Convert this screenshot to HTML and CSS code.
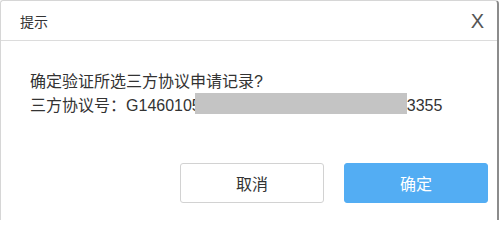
FILE: index.html
```html
<!DOCTYPE html>
<html lang="zh-CN">
<head>
<meta charset="utf-8">
<link rel="stylesheet" href="styles.css">
</head>
<body>
<div class="dialog">
  <div class="dialog-header">
    <span class="dialog-title">提示</span>
    <span class="dialog-close">X</span>
  </div>
  <div class="dialog-body">
    <p class="msg">确定验证所选三方协议申请记录?</p>
    <p class="msg">三方协议号<span class="colon">：</span>G1460105<span class="redact"></span>3355</p>
  </div>
  <div class="dialog-footer">
    <button class="btn btn-cancel">取消</button>
    <button class="btn btn-ok">确定</button>
  </div>
</div>
</body>
</html>
```

FILE: styles.css
```css
html, body {
  margin: 0;
  padding: 0;
  background: #fff;
}
body {
  width: 500px;
  height: 220px;
  overflow: hidden;
  font-family: "Liberation Sans", "Noto Sans CJK SC", sans-serif;
  color: #333;
}
.dialog {
  box-sizing: border-box;
  width: 499px;
  height: 220px;
  background: #fff;
  border-top: 1px solid #d6d6d6;
  border-left: 1px solid #d6d6d6;
  border-right: 2px solid #8c8c8c;
  border-radius: 3px 4px 0 0;
}
.dialog-header {
  height: 39px;
  border-bottom: 1px solid #dcdcdc;
  display: flex;
  align-items: center;
  justify-content: space-between;
  padding: 0 13px 0 19px;
}
.dialog-title {
  font-size: 14px;
  color: #333;
}
.dialog-close {
  font-size: 20px;
  color: #555;
  font-weight: normal;
  line-height: 20px;
}
.dialog-body {
  padding: 30px 0 0 29px;
}
.msg {
  margin: 0;
  font-size: 16px;
  line-height: 22px;
  white-space: nowrap;
}
.colon {
  font-family: "Noto Sans CJK TC", "Noto Sans CJK JP", sans-serif;
}
.redact {
  display: inline-block;
  width: 212px;
  height: 21px;
  margin-left: -6px;
  background: #c4c4c4;
  vertical-align: top;
}
.dialog-footer {
  display: flex;
  justify-content: flex-end;
  gap: 20px;
  padding: 46px 9px 0 0;
}
.btn {
  box-sizing: border-box;
  width: 144px;
  height: 40px;
  border-radius: 3px;
  font-family: "Liberation Sans", "Noto Sans CJK SC", sans-serif;
  font-size: 16px;
  cursor: pointer;
}
.btn-cancel {
  background: #fff;
  border: 1px solid #d2d2d2;
  color: #333;
}
.btn-ok {
  background: #53adf3;
  border: 1px solid #53adf3;
  color: #fff;
}
```
